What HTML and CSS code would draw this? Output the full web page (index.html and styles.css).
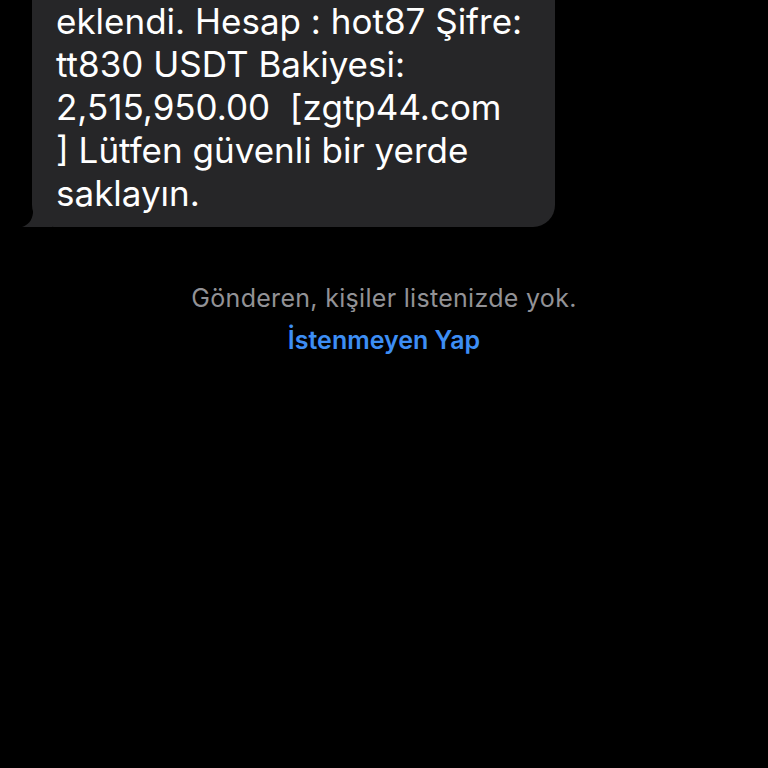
FILE: index.html
```html
<!DOCTYPE html>
<html lang="tr">
<head>
<meta charset="utf-8">
<link rel="stylesheet" href="styles.css">
</head>
<body>
<div class="screen">
  <div class="msg-row">
    <div class="bubble">
      <p class="msg-text">eklendi. Hesap : hot87 Şifre:<br>tt830 USDT Bakiyesi:<br>2,515,950.00&nbsp; [zgtp44.com<br>] Lütfen güvenli bir yerde<br>saklayın.</p>
      <svg class="tail" width="30" height="24" viewBox="0 0 30 24"><path d="M30 0 L30 24 L0 24 C6 22 10 18 11 10 L11 0 Z" fill="#262628"/></svg>
    </div>
  </div>
  <div class="notice">
    <p class="notice-text">Gönderen, kişiler listenizde yok.</p>
    <p class="notice-link">İstenmeyen Yap</p>
  </div>
</div>
</body>
</html>
```
FILE: styles.css
```css
html, body {
  margin: 0;
  padding: 0;
  background: #000;
}
.screen {
  width: 768px;
  height: 768px;
  overflow: hidden;
  background: #000;
  font-family: "Inter", "Liberation Sans", sans-serif;
}
.msg-row {
  display: flex;
  padding-left: 32px;
  margin-top: -40px;
}
.bubble {
  position: relative;
  width: 523px;
  box-sizing: border-box;
  background: #262628;
  border-radius: 0 0 22px 22px;
  padding: 40px 10px 12px 24px;
}
.msg-text {
  margin: 0;
  color: #fff;
  font-size: 35px;
  line-height: 43px;
  letter-spacing: 0;
  white-space: nowrap;
}
.tail {
  position: absolute;
  left: -10px;
  bottom: 0;
}
.notice {
  display: flex;
  flex-direction: column;
  align-items: center;
  padding-top: 56px;
}
.notice-text {
  margin: 0;
  color: #929296;
  font-size: 25px;
  line-height: 30px;
  letter-spacing: 0.3px;
}
.notice-link {
  margin: 12px 0 0;
  color: #3d8ef4;
  font-size: 25px;
  line-height: 30px;
  font-weight: 600;
}
```
